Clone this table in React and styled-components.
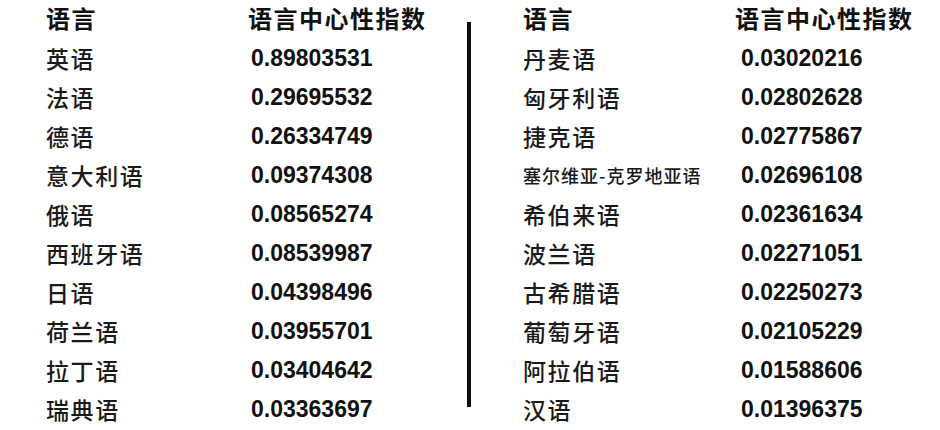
import React from 'react'
import styled, { createGlobalStyle } from 'styled-components'

const GlobalStyle = createGlobalStyle`
  html, body {
    margin: 0;
    padding: 0;
    background: #fff;
  }
  body {
    font-family: "Noto Sans CJK SC", "Noto Sans", sans-serif;
    color: #151515;
  }
`

const Page = styled.div`
  display: flex;
  width: 940px;
  height: 430px;
  overflow: hidden;
  background: #fff;
`

const Table = styled.div`
  width: ${props => props.w}px;
  padding-left: ${props => props.pad}px;
  box-sizing: border-box;
  display: grid;
  grid-template-columns: ${props => props.nameCol}px 1fr;
  grid-auto-rows: 39px;
  align-content: start;
`

const Divider = styled.div`
  width: 4px;
  height: 385px;
  margin-top: 22px;
  background: #0b0b0b;
  flex-shrink: 0;
`

const Head = styled.div`
  height: 35px;
  line-height: 35px;
  margin-bottom: 4px;
  font-size: 24px;
  font-weight: 700;
  letter-spacing: 1.5px;
  color: #111;
  white-space: nowrap;
`

const Name = styled.div`
  line-height: 39px;
  font-size: ${props => (props.small ? 18 : 23)}px;
  letter-spacing: ${props => (props.small ? 1 : 1.6)}px;
  font-weight: 500;
  color: #1a1a1a;
  white-space: nowrap;
`

const Value = styled.div`
  line-height: 39px;
  padding-left: ${props => props.indent}px;
  font-family: "Liberation Sans", Arial, sans-serif;
  font-size: 23px;
  font-weight: 700;
  letter-spacing: 0;
  color: #111;
`

const left = [
  ['英语', '0.89803531'],
  ['法语', '0.29695532'],
  ['德语', '0.26334749'],
  ['意大利语', '0.09374308'],
  ['俄语', '0.08565274'],
  ['西班牙语', '0.08539987'],
  ['日语', '0.04398496'],
  ['荷兰语', '0.03955701'],
  ['拉丁语', '0.03404642'],
  ['瑞典语', '0.03363697'],
]

const right = [
  ['丹麦语', '0.03020216'],
  ['匈牙利语', '0.02802628'],
  ['捷克语', '0.02775867'],
  ['塞尔维亚-克罗地亚语', '0.02696108', true],
  ['希伯来语', '0.02361634'],
  ['波兰语', '0.02271051'],
  ['古希腊语', '0.02250273'],
  ['葡萄牙语', '0.02105229'],
  ['阿拉伯语', '0.01588606'],
  ['汉语', '0.01396375'],
]

const Column = ({ rows, w, pad, nameCol, indent }) => (
  <Table w={w} pad={pad} nameCol={nameCol}>
    <Head>语言</Head>
    <Head>语言中心性指数</Head>
    {rows.map(([name, val, small]) => (
      <React.Fragment key={name}>
        <Name small={small}>{name}</Name>
        <Value indent={indent}>{val}</Value>
      </React.Fragment>
    ))}
  </Table>
)

const App = () => (
  <Page>
    <GlobalStyle />
    <Column rows={left} w={467} pad={46} nameCol={202} indent={3} />
    <Divider />
    <Column rows={right} w={469} pad={52} nameCol={212} indent={6} />
  </Page>
)

export default App
